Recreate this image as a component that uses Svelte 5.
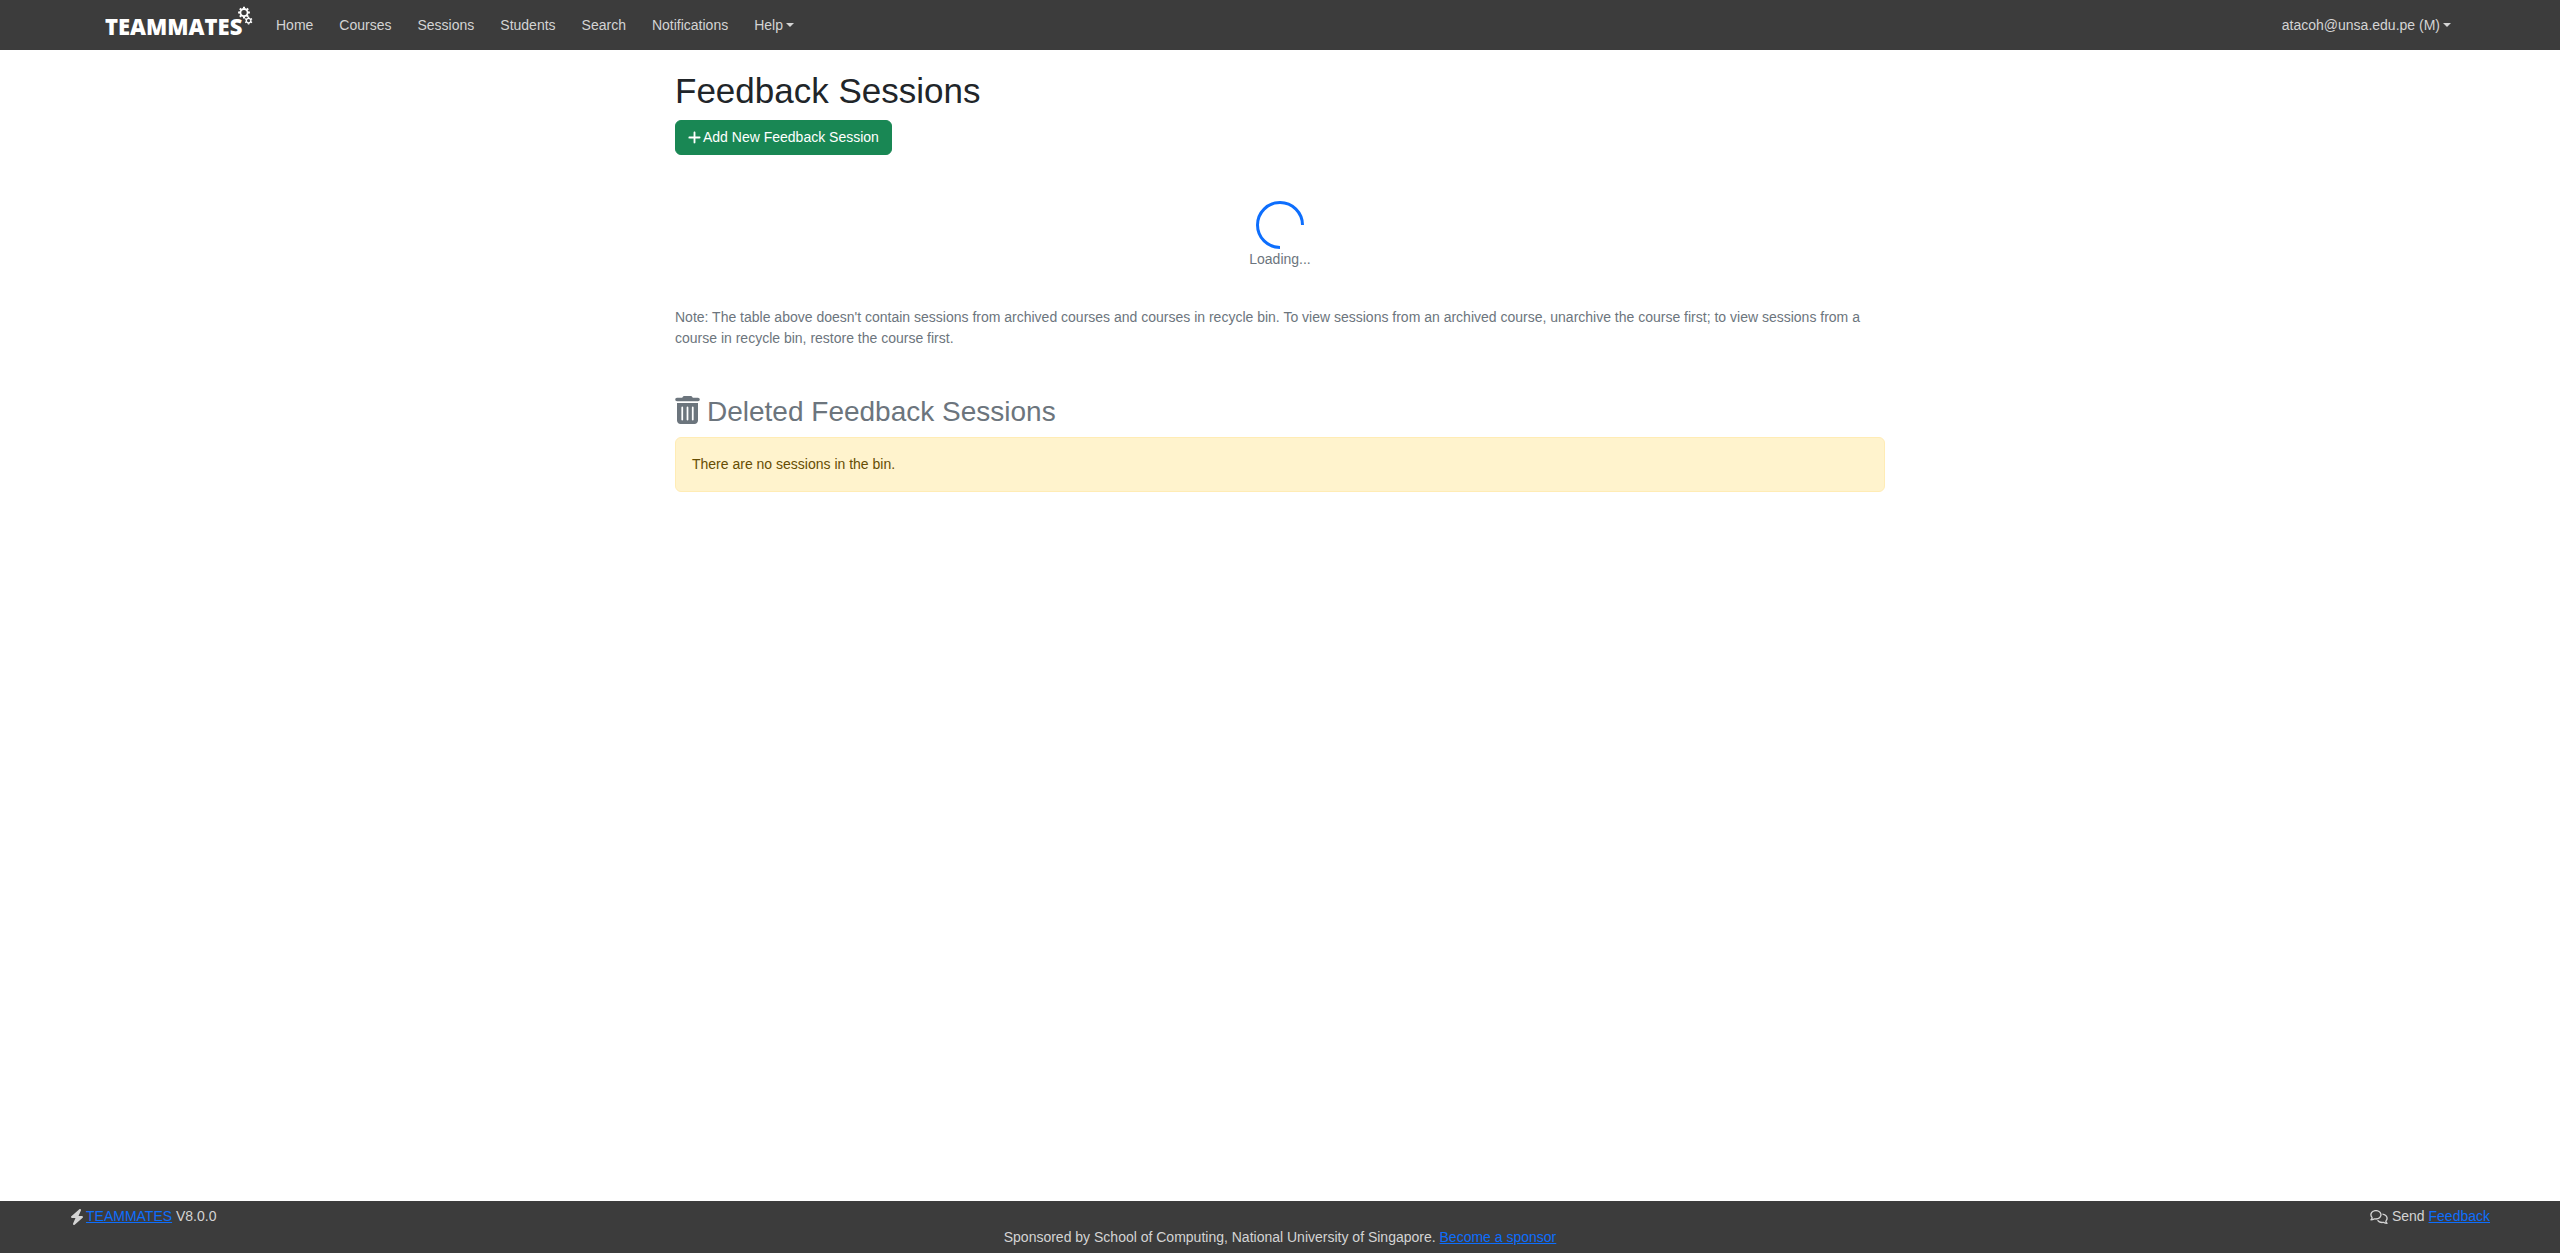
<script>
  const links = ['Home', 'Courses', 'Sessions', 'Students', 'Search', 'Notifications'];
  const bigTeeth = [0, 45, 90, 135, 180, 225, 270, 315];
  const smallTeeth = [0, 60, 120, 180, 240, 300];
</script>

<div class="page">
  <header class="navbar">
    <a class="brand" href="#home" aria-label="TEAMMATES home">
      <svg class="logo" viewBox="0 0 148 38" aria-hidden="true">
        <text class="logo-text" x="0" y="29">TEAMMATES</text>
        <g class="gear" transform="translate(139 6.6)">
          <circle r="3.6" stroke-width="1.8" />
          {#each bigTeeth as angle}
            <path d="M0-4V-5.9" stroke-width="2" transform="rotate({angle})" />
          {/each}
        </g>
        <g class="gear" transform="translate(143.6 14.6)">
          <circle r="2.3" stroke-width="1.3" />
          {#each smallTeeth as angle}
            <path d="M0-2.6V-3.9" stroke-width="1.5" transform="rotate({angle})" />
          {/each}
        </g>
      </svg>
    </a>
    <nav class="links" aria-label="Main">
      {#each links as link}
        <a class="nav-item" href="#{link.toLowerCase()}">{link}</a>
      {/each}
      <button class="nav-item dropdown" type="button" aria-haspopup="true">Help</button>
    </nav>
    <button class="nav-item dropdown" type="button" aria-haspopup="true">atacoh@unsa.edu.pe (M)</button>
  </header>

  <main class="content">
    <h1>Feedback Sessions</h1>
    <button class="add" type="button">
      <svg class="icon plus" viewBox="0 0 448 512" aria-hidden="true"><path d="M256 80c0-17.7-14.3-32-32-32s-32 14.3-32 32V224H48c-17.7 0-32 14.3-32 32s14.3 32 32 32H192V432c0 17.7 14.3 32 32 32s32-14.3 32-32V288H400c17.7 0 32-14.3 32-32s-14.3-32-32-32H256V80z" /></svg>
      Add New Feedback Session
    </button>

    <div class="loading" role="status">
      <svg class="spinner" viewBox="0 0 48 48" aria-hidden="true"><path d="M24 46.5A22.5 22.5 0 1 1 46.5 24" /></svg>
      <span>Loading...</span>
    </div>

    <p class="note">
      Note: The table above doesn't contain sessions from archived courses and courses in recycle bin. To view sessions from an archived course, unarchive the course first; to view sessions from a course in recycle bin, restore the course first.
    </p>

    <h2>
      <svg class="icon trash" viewBox="0 0 448 512" aria-hidden="true"><path d="M135.2 17.7C140.6 6.8 151.7 0 163.8 0H284.2c12.1 0 23.2 6.8 28.6 17.7L320 32h96c17.7 0 32 14.3 32 32s-14.3 32-32 32H32C14.3 96 0 81.7 0 64S14.3 32 32 32h96l7.2-14.3zM32 128H416V448c0 35.3-28.7 64-64 64H96c-35.3 0-64-28.7-64-64V128zm96 64c-8.8 0-16 7.2-16 16V432c0 8.8 7.2 16 16 16s16-7.2 16-16V208c0-8.8-7.2-16-16-16zm96 0c-8.8 0-16 7.2-16 16V432c0 8.8 7.2 16 16 16s16-7.2 16-16V208c0-8.8-7.2-16-16-16zm96 0c-8.8 0-16 7.2-16 16V432c0 8.8 7.2 16 16 16s16-7.2 16-16V208c0-8.8-7.2-16-16-16z" /></svg>
      Deleted Feedback Sessions
    </h2>
    <div class="alert">There are no sessions in the bin.</div>
  </main>

  <footer>
    <div class="footer-row">
      <span class="footer-item version">
        <svg class="icon bolt" viewBox="0 0 448 512" aria-hidden="true"><path d="M349.4 44.6c5.9-13.7 1.5-29.7-10.6-38.5s-28.6-8-39.9 1.8l-256 224c-10 8.8-13.6 22.9-8.9 35.3S50.7 288 64 288H175.5L98.6 467.4c-5.9 13.7-1.5 29.7 10.6 38.5s28.6 8 39.9-1.8l256-224c10-8.8 13.6-22.9 8.9-35.3s-16.6-20.7-30-20.7H272.5L349.4 44.6z" /></svg>
        <span><a href="#teammates">TEAMMATES</a> V8.0.0</span>
      </span>
      <span class="footer-item">
        <svg class="icon comments" viewBox="0 0 640 512" aria-hidden="true"><path d="M88.2 309.1c9.8-18.3 6.8-40.8-7.5-55.8C59.4 230.9 48 204 48 176c0-63.5 63.8-128 160-128s160 64.5 160 128s-63.8 128-160 128c-13.1 0-25.8-1.3-37.8-3.6c-10.4-2-21.2-.6-30.7 4.2c-4.1 2.1-8.3 4.1-12.6 6c-16 7.2-32.9 13.5-49.9 18c2.8-4.6 5.4-9.1 7.9-13.6c1.1-1.9 2.2-3.9 3.2-5.9zM0 176c0 41.8 17.2 80.1 45.9 110.3c-.9 1.7-1.9 3.5-2.8 5.1c-10.3 18.4-22.3 36.5-36.6 52.1c-6.6 7-8.3 17.2-4.6 25.9C5.8 378.3 14.4 384 24 384c43 0 86.5-13.3 122.7-29.7c4.8-2.2 9.6-4.5 14.2-6.8c15.1 3 30.9 4.5 47.1 4.5c114.9 0 208-78.8 208-176S322.9 0 208 0S0 78.8 0 176zM432 480c16.2 0 31.9-1.6 47.1-4.5c4.6 2.3 9.4 4.6 14.2 6.8C529.5 498.7 573 512 616 512c9.6 0 18.2-5.7 22-14.5c3.8-8.8 2-19-4.6-25.9c-14.2-15.6-26.2-33.7-36.6-52.1c-.9-1.7-1.9-3.4-2.8-5.1C622.8 384.1 640 345.8 640 304c0-94.4-87.9-171.5-198.2-175.8c4.1 15.2 6.2 31.2 6.2 47.8l0 .6c87.2 6.7 144 67.5 144 127.4c0 28-11.4 54.9-32.7 77.2c-14.3 15-17.3 37.6-7.5 55.8c1.1 2 2.2 4 3.2 5.9c2.5 4.5 5.2 9 7.9 13.6c-17-4.5-33.9-10.7-49.9-18c-4.3-1.9-8.5-3.9-12.6-6c-9.5-4.8-20.3-6.2-30.7-4.2c-12.1 2.4-24.7 3.6-37.8 3.6c-61.7 0-110-26.5-136.8-62.3c-16 5.4-32.8 9.4-50 11.8C279 439.8 350 480 432 480z" /></svg>
        <span>Send <a href="#feedback">Feedback</a></span>
      </span>
    </div>
    <p class="sponsor">Sponsored by School of Computing, National University of Singapore. <a href="#sponsor">Become a sponsor</a></p>
  </footer>
</div>

<style>
  :global(body) {
    background: #fff;
    color: #212529;
    font-family: "Liberation Sans", Arial, sans-serif;
    font-size: 14px;
    line-height: 21px;
  }
  .page {
    display: flex;
    flex-direction: column;
    min-height: 100vh;
  }
  .navbar {
    display: flex;
    align-items: center;
    box-sizing: border-box;
    min-height: 50px;
    padding: 0 96px 0 105px;
    background: #3c3c3c;
  }
  .brand {
    display: flex;
    margin-right: 10px;
  }
  .logo {
    width: 148px;
    height: 38px;
  }
  .logo-text {
    fill: #fff;
    font-family: "Open Sans", sans-serif;
    font-size: 22px;
    font-weight: 800;
  }
  .gear {
    fill: none;
    stroke: #fff;
  }
  .links {
    display: flex;
    flex: 1;
  }
  .nav-item {
    display: flex;
    align-items: center;
    padding: 7px 13px;
    border: 0;
    background: none;
    color: #d4d4d4;
    font: inherit;
    text-decoration: none;
    cursor: pointer;
  }
  .dropdown::after {
    content: "";
    margin-left: 3px;
    border: 4px solid transparent;
    border-top-color: currentColor;
    border-bottom: 0;
  }
  .content {
    flex: 1;
    box-sizing: border-box;
    width: 100%;
    max-width: 1230px;
    margin: 0 auto;
    padding: 20px 10px;
  }
  h1,
  h2 {
    margin: 0 0 8px;
    font-weight: 400;
  }
  h1 {
    font-size: 35px;
    line-height: 42px;
  }
  .icon {
    flex: none;
    fill: currentColor;
  }
  .add {
    display: flex;
    align-items: center;
    gap: 2px;
    padding: 6px 12px;
    border: 1px solid #198754;
    border-radius: 6px;
    background: #198754;
    color: #fff;
    font: inherit;
    cursor: pointer;
  }
  .plus {
    width: 13px;
    height: 15px;
  }
  .bolt {
    width: 14px;
    height: 16px;
  }
  .loading {
    display: flex;
    flex-direction: column;
    align-items: center;
    padding: 46px 0 37px;
    color: #6c757d;
  }
  .spinner {
    width: 48px;
    height: 48px;
    fill: none;
    stroke: #0d6efd;
    stroke-width: 3;
  }
  .note {
    margin: 0 0 46px;
    color: #6c757d;
  }
  h2 {
    display: flex;
    align-items: center;
    gap: 7px;
    color: #6c757d;
    font-size: 28px;
    line-height: 34px;
  }
  .trash {
    width: 25px;
    height: 28px;
    margin-bottom: 4px;
  }
  .alert {
    padding: 16px;
    border: 1px solid #ffecb5;
    border-radius: 6px;
    background: #fff3cd;
    color: #664d03;
  }
  footer {
    padding: 5px 70px;
    background: #3c3c3c;
    color: #d4d4d4;
  }
  footer a {
    color: #0d6efd;
  }
  .footer-row,
  .footer-item {
    display: flex;
    align-items: center;
  }
  .footer-row {
    justify-content: space-between;
  }
  .footer-item {
    gap: 4px;
  }
  .version {
    gap: 2px;
  }
  .comments {
    width: 18px;
    height: 14px;
  }
  .sponsor {
    margin: 0;
    text-align: center;
  }
</style>
